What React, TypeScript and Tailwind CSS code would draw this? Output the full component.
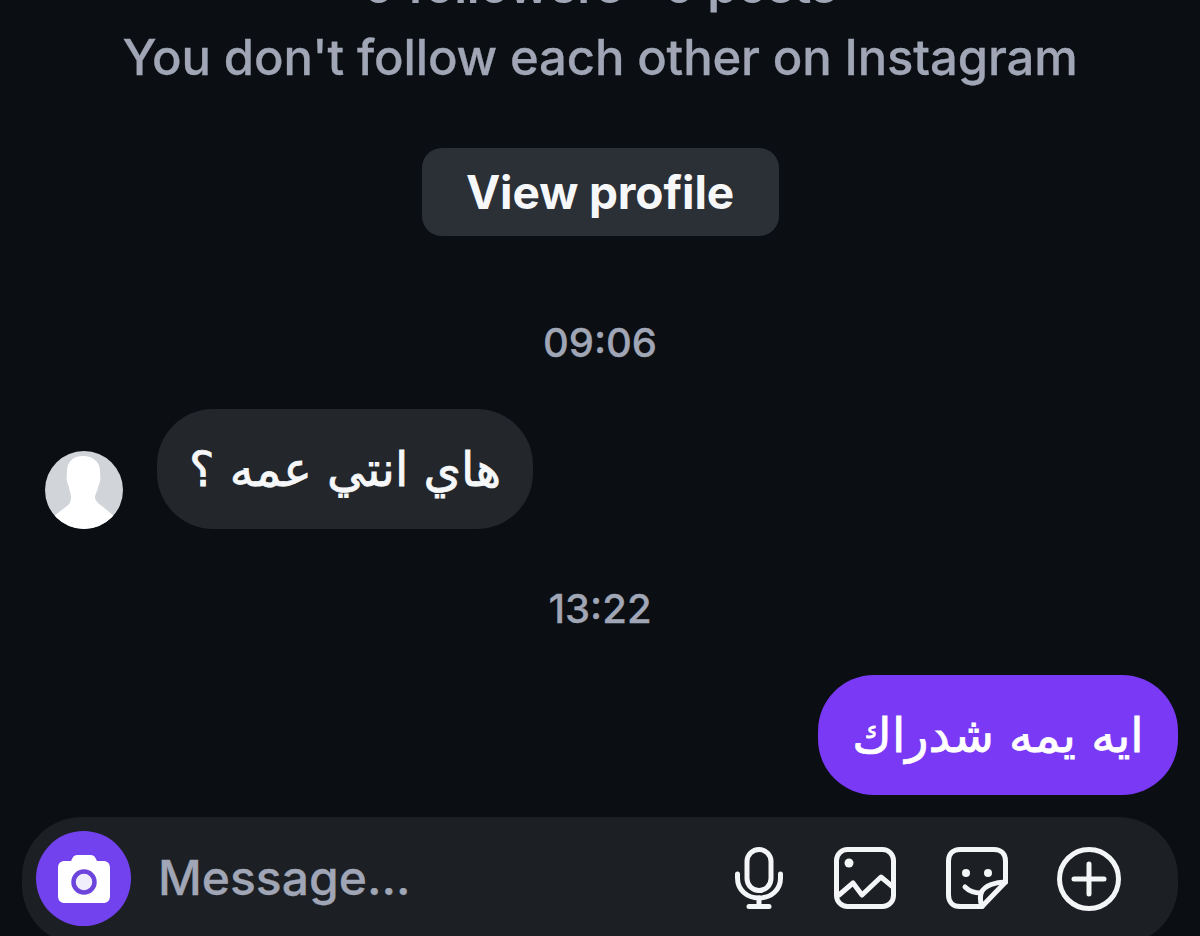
const arabicFont = "font-['DejaVu_Sans',sans-serif] [-webkit-text-stroke:0.8px_currentColor]";

function Avatar() {
    return (
        <svg viewBox="0 0 78 78" className="w-[78px] h-[78px] shrink-0">
            <defs>
                <clipPath id="avatar-clip">
                    <circle cx="39" cy="39" r="39" />
                </clipPath>
            </defs>
            <g clipPath="url(#avatar-clip)">
                <rect width="78" height="78" fill="#d1d4d9" />
                <path
                    d="M38 5c-10 0-16 6-16 15 0 4-1 7 0 10 0 3 2 4 2 7 1 4 2 6 2 9 0 4-1 7-4 9L9 65v13h60V65l-12-10c-3-2-7-5-7-9 0-3 2-5 3-9 0-3 2-4 2-7 1-3 0-6 0-10 0-9-7-15-17-15z"
                    fill="#ffffff"
                />
            </g>
        </svg>
    );
}

function CameraIcon() {
    return (
        <svg viewBox="0 0 52 48" className="w-[52px] h-[48px]">
            <path
                d="M7 6h6l1.500-3C15.500 1 17 0 19.500 0h13c2.500 0 4 1 5 3L39 6h6c4.500 0 7 2.500 7 7v28c0 4.500-2.500 7-7 7H7c-4.500 0-7-2.500-7-7V13c0-4.500 2.500-7 7-7z"
                fill="#ffffff"
            />
            <circle cx="26" cy="27" r="10.500" fill="#f1eefc" stroke="#6d45dd" strokeWidth="4.500" />
        </svg>
    );
}

function MicIcon() {
    return (
        <svg viewBox="0 0 48 62" className="w-[48px] h-[62px]" fill="none" stroke="#f4f5f6" strokeWidth="5" strokeLinecap="round" strokeLinejoin="round">
            <rect x="12" y="2.500" width="24" height="41" rx="12" />
            <path d="M2.500 27v4c0 12 9.500 20 21.500 20s21.500-8 21.500-20v-4" />
            <path d="M24 51v8" />
            <path d="M14 59.500h20" />
        </svg>
    );
}

function ImageIcon() {
    return (
        <svg viewBox="0 0 62 62" className="w-[62px] h-[62px]" fill="none" stroke="#f4f5f6" strokeWidth="5" strokeLinecap="round" strokeLinejoin="round">
            <rect x="2.500" y="2.500" width="57" height="57" rx="11" />
            <circle cx="15" cy="16" r="4.500" fill="#f4f5f6" stroke="none" />
            <path d="M5 48l14-12 9 12 19-18 12 10" />
        </svg>
    );
}

function StickerIcon() {
    return (
        <svg viewBox="0 0 62 62" className="w-[62px] h-[62px]" fill="none" stroke="#f4f5f6" strokeWidth="5" strokeLinecap="round" strokeLinejoin="round">
            <path d="M36 59.500H14C7 59.500 2.500 55 2.500 48V14C2.500 7 7 2.500 14 2.500h34c7 0 11.500 4.500 11.500 11.500v21L36 59.500z" />
            <circle cx="20" cy="26" r="4" fill="#f4f5f6" stroke="none" />
            <circle cx="42" cy="26" r="4" fill="#f4f5f6" stroke="none" />
            <path d="M19 40c4 4 10 6 16 6" />
            <path d="M35 46c-1 5-1 9 1 13.500M59.500 35c-9 0-21 3-24.500 11" />
        </svg>
    );
}

function PlusIcon() {
    return (
        <svg viewBox="0 0 64 64" className="w-[64px] h-[64px]" fill="none" stroke="#f4f5f6" strokeWidth="5" strokeLinecap="round">
            <circle cx="32" cy="32" r="29.500" />
            <path d="M32 17v30M17 32h30" />
        </svg>
    );
}

export default function App() {
    return (
        <div className="h-[936px] w-full overflow-hidden bg-[#0b0f14] font-['Inter',sans-serif] flex flex-col">
            <div className="shrink-0 flex flex-col items-center text-[#a0a6b5] text-[49px] leading-[56px] font-medium -mt-[42px]">
                <p className="font-semibold tracking-[-0.2px]">0 followers · 0 posts</p>
                <p className="mt-[16px] tracking-[-0.15px] [-webkit-text-stroke:0.3px_currentColor]">You don't follow each other on Instagram</p>
            </div>

            <div className="shrink-0 mt-[62px] self-center w-[357px] h-[88px] rounded-[20px] bg-[#2b2f36] flex items-center justify-center text-[#f6f7f8] text-[46px] font-bold tracking-[-0.1px]">
                View profile
            </div>

            <p className="shrink-0 mt-[85px] text-center text-[#a0a6b5] text-[40px] leading-[44px] font-medium [-webkit-text-stroke:0.3px_currentColor]">09:06</p>

            <div className="shrink-0 mt-[44px] ml-[45px] flex items-end gap-[34px]">
                <Avatar />
                <div
                    dir="rtl"
                    className={`w-[376px] h-[120px] rounded-[56px] bg-[#23272c] flex items-center justify-center text-[#f6f7f8] text-[48px] ${arabicFont}`}
                >
                    هاي انتي عمه ؟
                </div>
            </div>

            <p className="shrink-0 mt-[58px] text-center text-[#a0a6b5] text-[40px] leading-[44px] font-medium [-webkit-text-stroke:0.3px_currentColor]">13:22</p>

            <div className="shrink-0 mt-[44px] mr-[22px] flex justify-end">
                <div
                    dir="rtl"
                    className={`w-[360px] h-[120px] rounded-[56px] bg-[#7a3af5] flex items-center justify-center text-white text-[48px] ${arabicFont}`}
                >
                    ايه يمه شدراك
                </div>
            </div>

            <div className="shrink-0 mt-[22px] mx-[22px] h-[128px] rounded-[60px] bg-[#1c1f23] flex items-start pt-[14px] pl-[14px] pr-[57px]">
                <div className="w-[95px] h-[95px] rounded-full bg-[#7142ee] flex items-center justify-center">
                    <CameraIcon />
                </div>
                <p className="ml-[27px] mt-[19px] text-[#a0a6b5] text-[48px] leading-[56px] font-medium flex-1 [-webkit-text-stroke:0.3px_currentColor]">Message...</p>
                <div className="mt-[16px] flex items-start">
                    <MicIcon />
                    <div className="ml-[51px]"><ImageIcon /></div>
                    <div className="ml-[50px]"><StickerIcon /></div>
                    <div className="ml-[49px]"><PlusIcon /></div>
                </div>
            </div>
        </div>
    );
}
